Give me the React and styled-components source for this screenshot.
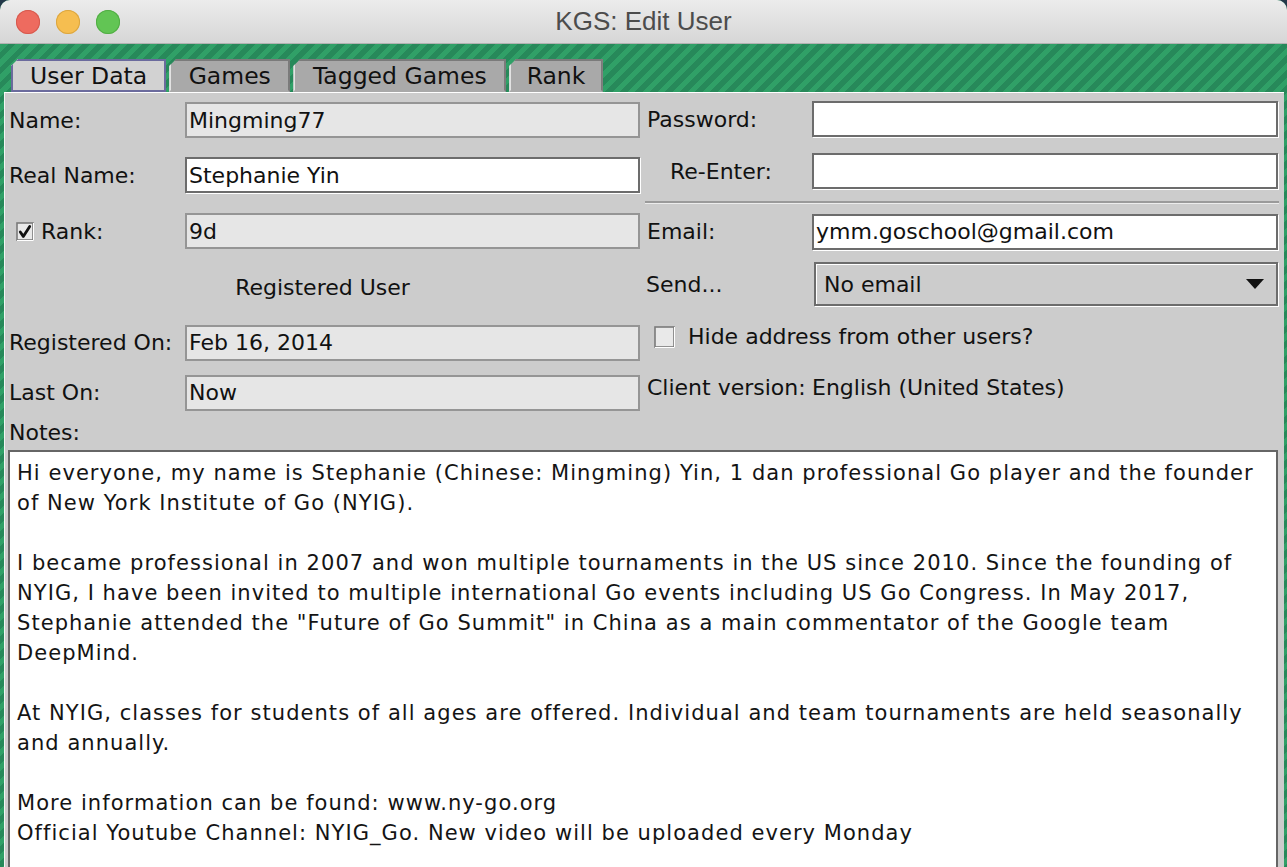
import React from "react";
import styled, { createGlobalStyle } from "styled-components";

const GlobalStyle = createGlobalStyle`
  html, body {
    margin: 0;
    padding: 0;
    background: #24384a;
  }
  body {
    width: 1287px;
    height: 867px;
    overflow: hidden;
    font-family: "DejaVu Sans", "Liberation Sans", sans-serif;
    color: #111;
  }
`;

const Window = styled.div`
  width: 1287px;
  height: 867px;
  display: flex;
  flex-direction: column;
  overflow: hidden;
  border-radius: 10px 10px 0 0;
  background: repeating-linear-gradient(
    135deg,
    #30a067 0px,
    #30a067 5px,
    #27895a 5px,
    #27895a 10.6px
  );
`;

const TitleBar = styled.div`
  height: 43px;
  flex: none;
  display: flex;
  align-items: center;
  justify-content: center;
  position: relative;
  background: linear-gradient(#ececec, #d6d6d6);
  border-bottom: 1px solid #b2b2b2;
  font-family: "Liberation Sans", "Open Sans", sans-serif;
  font-size: 26px;
  color: #4c4c4c;
`;

const Lights = styled.div`
  position: absolute;
  left: 16px;
  top: 10px;
  display: flex;
  gap: 16px;
`;

const Light = styled.span`
  width: 24px;
  height: 24px;
  border-radius: 50%;
  background: ${(p) => p.$color};
  box-shadow: inset 0 0 0 1px ${(p) => p.$ring};
`;

const Body = styled.div`
  flex: 1;
  display: flex;
  flex-direction: column;
  padding: 0 3px 0 4px;
  min-height: 0;
`;

const TabStrip = styled.div`
  display: flex;
  align-items: flex-end;
  gap: 3px;
  padding: 15px 0 0 7px;
  height: 48px;
  box-sizing: border-box;
`;

const Tab = styled.div`
  height: 33px;
  box-sizing: border-box;
  display: flex;
  align-items: center;
  padding: 0 ${(p) => p.$pad || 17}px;
  font-size: 23.5px;
  color: #111;
  clip-path: polygon(7px 0, 100% 0, 100% 100%, 0 100%, 0 7px);
  background: ${(p) => (p.$active ? "#d2d2d2" : "#a9a9a9")};
  border: 2px solid ${(p) => (p.$active ? "#6b6b9d" : "#7b7b7b")};
  border-left-color: ${(p) => (p.$active ? "#6b6b9d" : "#e2e2e2")};
  border-bottom-color: ${(p) => (p.$active ? "#6b6b9d" : "#a9a9a9")};
  box-shadow: ${(p) => (p.$active ? "-1px -1px 0 #fff" : "none")};
`;

const Panel = styled.div`
  flex: 1;
  background: #cccccc;
  border-top: 1px solid #ffffff;
  border-left: 1px solid #f4f4f4;
  display: flex;
  flex-direction: column;
  min-height: 0;
`;

const TopSection = styled.div`
  display: grid;
  grid-template-columns: 640px 1fr;
`;

const LeftCol = styled.div`
  display: flex;
  flex-direction: column;
  padding-left: 4px;
`;

const RightCol = styled.div`
  display: flex;
  flex-direction: column;
  padding-right: 5px;
`;

const Row = styled.div`
  height: ${(p) => p.$h}px;
  display: grid;
  grid-template-columns: ${(p) => p.$cols};
  align-items: center;
`;

const Label = styled.div`
  font-size: 22px;
  padding-left: ${(p) => p.$indent || 0}px;
  white-space: nowrap;
`;

const Field = styled.div`
  height: 36px;
  box-sizing: border-box;
  display: flex;
  align-items: center;
  padding-left: 2px;
  font-size: 22px;
  white-space: nowrap;
  background: ${(p) => (p.$readOnly ? "#e6e6e6" : "#ffffff")};
  border: 2px solid ${(p) => (p.$readOnly ? "#959595" : "#6c6c6c")};
  box-shadow: ${(p) => (p.$readOnly ? "none" : "1px 1px 0 #ffffff")};
`;

const CenterNote = styled.div`
  grid-column: 1 / -1;
  text-align: center;
  font-size: 22px;
  padding-right: 4px;
`;

const CheckLabel = styled.label`
  display: flex;
  align-items: center;
  gap: ${(p) => p.$gap || 10}px;
  padding-left: ${(p) => p.$indent || 0}px;
  font-size: 22px;
  white-space: nowrap;
`;

const Separator = styled.div`
  height: ${(p) => p.$h}px;
  display: flex;
  align-items: center;
  &::after {
    content: "";
    flex: 1;
    height: 2px;
    background: #9a9a9a;
    border-bottom: 1px solid #ececec;
  }
`;

const Combo = styled.div`
  height: 44px;
  margin-left: 2px;
  box-sizing: border-box;
  display: flex;
  align-items: center;
  justify-content: space-between;
  padding: 0 12px 0 8px;
  font-size: 22px;
  background: #cccccc;
  border: 2px solid #6c6c6c;
  box-shadow: inset 1px 1px 0 #ffffff, 1px 1px 0 #ffffff;
`;

const NotesLabel = styled.div`
  height: 32px;
  display: flex;
  align-items: center;
  padding-left: 4px;
  font-size: 22px;
`;

const NotesBox = styled.div`
  flex: 1;
  margin: 2px 0 0 3px;
  width: 1270px;
  box-sizing: border-box;
  background: #ffffff;
  border: 2px solid #666666;
  border-bottom: none;
  padding: 6px 0 0 7px;
  font-size: 21px;
  letter-spacing: 1.05px;
  line-height: 30px;
  white-space: pre;
  overflow: hidden;
  color: #141414;
`;

function CheckBox({ checked, size = 18 }) {
  const s = size;
  return (
    <svg width={s} height={s + 1} viewBox={`0 0 ${s} ${s + 1}`}>
      <rect x="1" y="1" width={s - 2} height={s - 1} fill="#e9e9e9" stroke="#7a7a7a" strokeWidth="1.6" />
      <path d={`M${s - 0.5} 1 V${s + 0.5} H1`} fill="none" stroke="#ffffff" strokeWidth="1" />
      {checked && (
        <path
          d="M4.3 10 L7.3 14.4 L13.7 4.5"
          fill="none"
          stroke="#111"
          strokeWidth="2.8"
          strokeLinecap="round"
          strokeLinejoin="round"
        />
      )}
    </svg>
  );
}

function DownArrow() {
  return (
    <svg width="18" height="10" viewBox="0 0 18 10">
      <path d="M0 0 H18 L9 10 Z" fill="#111" />
    </svg>
  );
}

const notes = [
  "Hi everyone, my name is Stephanie (Chinese: Mingming) Yin, 1 dan professional Go player and the founder",
  "of New York Institute of Go (NYIG).",
  "",
  "I became professional in 2007 and won multiple tournaments in the US since 2010. Since the founding of",
  "NYIG, I have been invited to multiple international Go events including US Go Congress. In May 2017,",
  'Stephanie attended the "Future of Go Summit" in China as a main commentator of the Google team',
  "DeepMind.",
  "",
  "At NYIG, classes for students of all ages are offered. Individual and team tournaments are held seasonally",
  "and annually.",
  "",
  "More information can be found: www.ny-go.org",
  "Official Youtube Channel: NYIG_Go. New video will be uploaded every Monday",
].join("\n");

const LEFT = "176px 455px";
const RIGHT = "167px 466px";

export default function App() {
  return (
    <>
      <GlobalStyle />
      <Window>
        <TitleBar>
          <Lights>
            <Light $color="#ee6b5f" $ring="#d65a4f" />
            <Light $color="#f6be50" $ring="#dba640" />
            <Light $color="#62c554" $ring="#52ad45" />
          </Lights>
          KGS: Edit User
        </TitleBar>
        <Body>
          <TabStrip>
            <Tab $active $pad={17}>User Data</Tab>
            <Tab $pad={17.5}>Games</Tab>
            <Tab $pad={17.5}>Tagged Games</Tab>
            <Tab $pad={15.5}>Rank</Tab>
          </TabStrip>
          <Panel>
            <TopSection>
              <LeftCol>
                <Row $h={54} $cols={LEFT}>
                  <Label>Name:</Label>
                  <Field $readOnly>Mingming77</Field>
                </Row>
                <Row $h={56} $cols={LEFT}>
                  <Label>Real Name:</Label>
                  <Field>Stephanie Yin</Field>
                </Row>
                <Row $h={56} $cols={LEFT}>
                  <CheckLabel $indent={7} $gap={7}>
                    <CheckBox checked />
                    Rank:
                  </CheckLabel>
                  <Field $readOnly>9d</Field>
                </Row>
                <Row $h={57} $cols={LEFT}>
                  <CenterNote>Registered User</CenterNote>
                </Row>
                <Row $h={53} $cols={LEFT}>
                  <Label>Registered On:</Label>
                  <Field $readOnly>Feb 16, 2014</Field>
                </Row>
                <Row $h={47} $cols={LEFT}>
                  <Label>Last On:</Label>
                  <Field $readOnly>Now</Field>
                </Row>
              </LeftCol>
              <RightCol>
                <Row $h={52} $cols={RIGHT}>
                  <Label $indent={2}>Password:</Label>
                  <Field />
                </Row>
                <Row $h={52} $cols={RIGHT}>
                  <Label $indent={25}>Re-Enter:</Label>
                  <Field />
                </Row>
                <Separator $h={11} />
                <Row $h={47} $cols={RIGHT}>
                  <Label $indent={2}>Email:</Label>
                  <Field>ymm.goschool@gmail.com</Field>
                </Row>
                <Row $h={58} $cols={RIGHT}>
                  <Label $indent={1}>Send...</Label>
                  <Combo>
                    No email
                    <DownArrow />
                  </Combo>
                </Row>
                <Row $h={47} $cols="1fr">
                  <CheckLabel $indent={9} $gap={13}>
                    <CheckBox size={21} />
                    Hide address from other users?
                  </CheckLabel>
                </Row>
                <Row $h={54} $cols={RIGHT}>
                  <Label $indent={2}>Client version:</Label>
                  <Label>English (United States)</Label>
                </Row>
              </RightCol>
            </TopSection>
            <NotesLabel>Notes:</NotesLabel>
            <NotesBox>{notes}</NotesBox>
          </Panel>
        </Body>
      </Window>
    </>
  );
}
